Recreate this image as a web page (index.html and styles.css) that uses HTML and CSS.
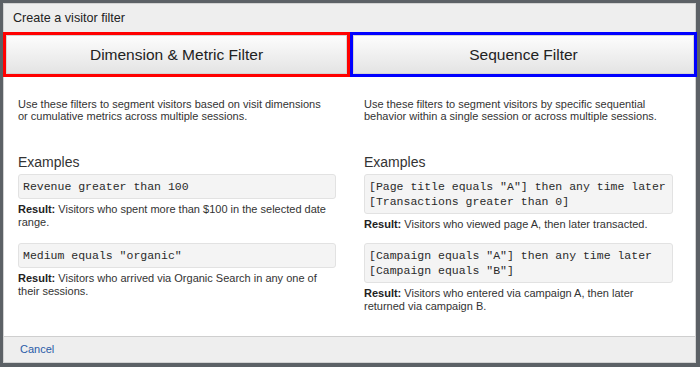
FILE: index.html
```html
<!DOCTYPE html>
<html lang="en">
<head>
  <meta charset="UTF-8" />
  <title>Create a visitor filter</title>
  <link rel="stylesheet" href="styles.css">
</head>
<body>

<div class="dialog">
  <div class="dialog-title">Create a visitor filter</div>

  <div class="tabs">
    <button class="tab tab-metric">Dimension &amp; Metric Filter</button>
    <button class="tab tab-sequence">Sequence Filter</button>
  </div>

  <div class="dialog-body">
    <p class="intro">Use these filters to segment visitors based on visit dimensions or cumulative metrics across multiple sessions.</p>
    <p class="intro">Use these filters to segment visitors by specific sequential behavior within a single session or across multiple sessions.</p>

    <h3>Examples</h3>
    <h3>Examples</h3>

    <div class="example">
      <pre>Revenue greater than 100</pre>
      <p><strong>Result:</strong> Visitors who spent more than $100 in the selected date range.</p>
    </div>
    <div class="example">
      <pre>[Page title equals "A"] then any time later
[Transactions greater than 0]</pre>
      <p><strong>Result:</strong> Visitors who viewed page A, then later transacted.</p>
    </div>

    <div class="example">
      <pre>Medium equals "organic"</pre>
      <p><strong>Result:</strong> Visitors who arrived via Organic Search in any one of their sessions.</p>
    </div>
    <div class="example">
      <pre>[Campaign equals "A"] then any time later
[Campaign equals "B"]</pre>
      <p><strong>Result:</strong> Visitors who entered via campaign A, then later returned via campaign B.</p>
    </div>
  </div>

  <div class="dialog-footer">
    <a href="#">Cancel</a>
  </div>
</div>

</body>
</html>
```

FILE: styles.css
```css
html, body {
  height: 100%;
}
body {
  font-family: 'Liberation Sans', Arial, sans-serif;
  background: #5c6166;
  margin: 0;
  padding: 3px 4px 4px 3px;
  box-sizing: border-box;
  color: #333;
}
.dialog {
  height: 100%;
  box-sizing: border-box;
  border: 1px solid #d2d2d2;
  background: white;
  display: flex;
  flex-direction: column;
}
.dialog-title {
  flex-shrink: 0;
  height: 28px;
  display: flex;
  align-items: center;
  padding-left: 9px;
  background: #eeeeee;
  font-size: 12.6px;
  color: #222;
}
.tabs {
  flex-shrink: 0;
  display: flex;
  margin: 0 -2px 0 -1px;
}
.tab {
  flex: 1;
  height: 45px;
  border: 3px solid;
  background: linear-gradient(#fdfdfd, #e3e3e3);
  box-shadow: inset 0 0 0 1px #d4d4d4;
  font-family: 'Liberation Sans', Arial, sans-serif;
  font-size: 15.5px;
  color: #222;
  cursor: pointer;
  padding: 0;
}
.tab-metric {
  border-color: #ff0000;
}
.tab-sequence {
  border-color: #0000ff;
}
.dialog-body {
  flex: 1;
  min-height: 0;
  overflow: hidden;
  display: grid;
  grid-template-columns: 318px 309px;
  column-gap: 28px;
  align-content: start;
  padding: 21px 0 0 14px;
  font-size: 11px;
  line-height: 13px;
}
.intro {
  margin: 0 0 32px;
  padding-right: 6px;
  line-height: 12px;
}
h3 {
  margin: 0 0 4px;
  font-size: 14px;
  line-height: 16px;
  font-weight: normal;
  color: #333;
}
.example {
  margin-bottom: 12px;
}
.example pre {
  margin: 0;
  padding: 4px 4px;
  background: #f4f4f4;
  border: 1px solid #e2e2e2;
  border-radius: 3px;
  font-family: 'Liberation Mono', 'Courier New', monospace;
  font-size: 11.5px;
  line-height: 15px;
  color: #2a2a2a;
}
.example p {
  margin: 4px 0 0;
}
.example strong {
  color: #222;
}
.dialog-footer {
  flex-shrink: 0;
  height: 19px;
  border-top: 1px solid #cfcfcf;
  background: #eeeeee;
  padding: 6px 0 0 16px;
  font-size: 11px;
  line-height: 13px;
}
.dialog-footer a {
  color: #2a5ca8;
  text-decoration: none;
}
```
